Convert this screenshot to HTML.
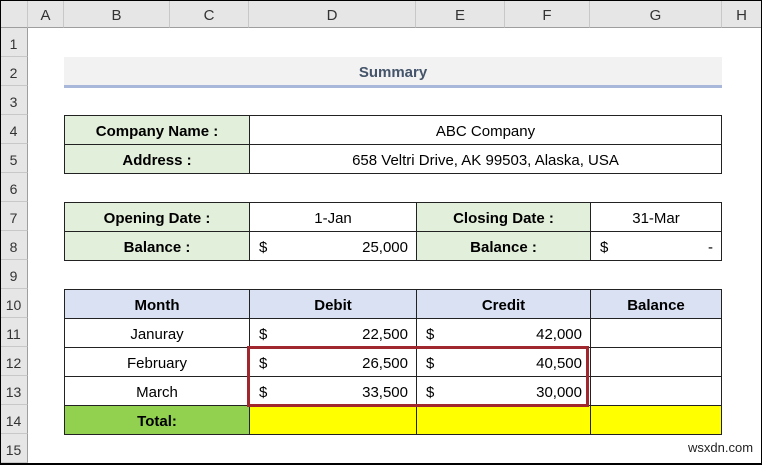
<!DOCTYPE html>
<html><head><style>
*{margin:0;padding:0;box-sizing:border-box}
body{width:762px;height:465px;overflow:hidden;background:#fff;font-family:"Liberation Sans",Calibri,sans-serif;position:relative}
.a{position:absolute}
.ch{position:absolute;top:0;height:28px;background:#e6e6e6;border-right:1px solid #c8c8c8;border-bottom:1px solid #9e9e9e;font-size:15px;color:#333;text-align:center;line-height:32px}
.rh{position:absolute;left:0;width:28px;height:29px;background:#e6e6e6;border-bottom:1px solid #c8c8c8;border-right:1px solid #9e9e9e;font-size:14px;color:#333;text-align:center;line-height:32px}
.c{position:absolute;height:30px;border:1px solid #222;font-size:15px;line-height:31px;text-align:center;color:#000}
.g{background:#e2efda;font-weight:bold}
.h{background:#d9e1f2;font-weight:bold}
.m{text-align:right;padding-right:8px}
.m span{position:absolute;left:9px}
</style></head><body>
<div class="ch" style="left:0;width:28px"></div>
<div class="ch" style="left:28px;width:36px">A</div>
<div class="ch" style="left:64px;width:106px">B</div>
<div class="ch" style="left:170px;width:79px">C</div>
<div class="ch" style="left:249px;width:167px">D</div>
<div class="ch" style="left:416px;width:89px">E</div>
<div class="ch" style="left:505px;width:85px">F</div>
<div class="ch" style="left:590px;width:132px">G</div>
<div class="ch" style="left:722px;width:40px">H</div>
<div class="rh" style="top:28px">1</div>
<div class="rh" style="top:57px">2</div>
<div class="rh" style="top:86px">3</div>
<div class="rh" style="top:115px">4</div>
<div class="rh" style="top:144px">5</div>
<div class="rh" style="top:173px">6</div>
<div class="rh" style="top:202px">7</div>
<div class="rh" style="top:231px">8</div>
<div class="rh" style="top:260px">9</div>
<div class="rh" style="top:289px">10</div>
<div class="rh" style="top:318px">11</div>
<div class="rh" style="top:347px">12</div>
<div class="rh" style="top:376px">13</div>
<div class="rh" style="top:405px">14</div>
<div class="rh" style="top:434px">15</div>

<div class="a" style="left:64px;top:57px;width:658px;height:31px;background:#f2f2f2;border-bottom:3px solid #a9b8da;font-weight:bold;font-size:15px;color:#44546a;text-align:center;line-height:31px">Summary</div>

<div class="c g" style="left:64px;top:115px;width:186px">Company Name :</div>
<div class="c" style="left:249px;top:115px;width:473px">ABC Company</div>
<div class="c g" style="left:64px;top:144px;width:186px">Address :</div>
<div class="c" style="left:249px;top:144px;width:473px">658 Veltri Drive, AK 99503, Alaska, USA</div>

<div class="c g" style="left:64px;top:202px;width:186px">Opening Date :</div>
<div class="c" style="left:249px;top:202px;width:168px">1-Jan</div>
<div class="c g" style="left:416px;top:202px;width:175px">Closing Date :</div>
<div class="c" style="left:590px;top:202px;width:132px">31-Mar</div>
<div class="c g" style="left:64px;top:231px;width:186px">Balance :</div>
<div class="c m" style="left:249px;top:231px;width:168px"><span>$</span>25,000</div>
<div class="c g" style="left:416px;top:231px;width:175px">Balance :</div>
<div class="c m" style="left:590px;top:231px;width:132px"><span>$</span>-</div>

<div class="c h" style="left:64px;top:289px;width:186px">Month</div>
<div class="c h" style="left:249px;top:289px;width:168px">Debit</div>
<div class="c h" style="left:416px;top:289px;width:175px">Credit</div>
<div class="c h" style="left:590px;top:289px;width:132px">Balance</div>

<div class="c" style="left:64px;top:318px;width:186px">Januray</div>
<div class="c m" style="left:249px;top:318px;width:168px"><span>$</span>22,500</div>
<div class="c m" style="left:416px;top:318px;width:175px"><span>$</span>42,000</div>
<div class="c" style="left:590px;top:318px;width:132px"></div>
<div class="c" style="left:64px;top:347px;width:186px">February</div>
<div class="c m" style="left:249px;top:347px;width:168px"><span>$</span>26,500</div>
<div class="c m" style="left:416px;top:347px;width:175px"><span>$</span>40,500</div>
<div class="c" style="left:590px;top:347px;width:132px"></div>
<div class="c" style="left:64px;top:376px;width:186px">March</div>
<div class="c m" style="left:249px;top:376px;width:168px"><span>$</span>33,500</div>
<div class="c m" style="left:416px;top:376px;width:175px"><span>$</span>30,000</div>
<div class="c" style="left:590px;top:376px;width:132px"></div>
<div class="c" style="left:64px;top:405px;width:186px;background:#92d050;font-weight:bold">Total:</div>
<div class="c" style="left:249px;top:405px;width:168px;background:#ffff00"></div>
<div class="c" style="left:416px;top:405px;width:175px;background:#ffff00"></div>
<div class="c" style="left:590px;top:405px;width:132px;background:#ffff00"></div>

<div class="a" style="left:247px;top:346px;width:342px;height:61px;border:3px solid #a0272d"></div>
<div class="a" style="left:688px;top:440px;font-size:13px;color:#222">wsxdn.com</div>
<div class="a" style="left:0;top:0;width:762px;height:465px;border:1px solid #000;border-bottom-width:2px"></div>
</body></html>
